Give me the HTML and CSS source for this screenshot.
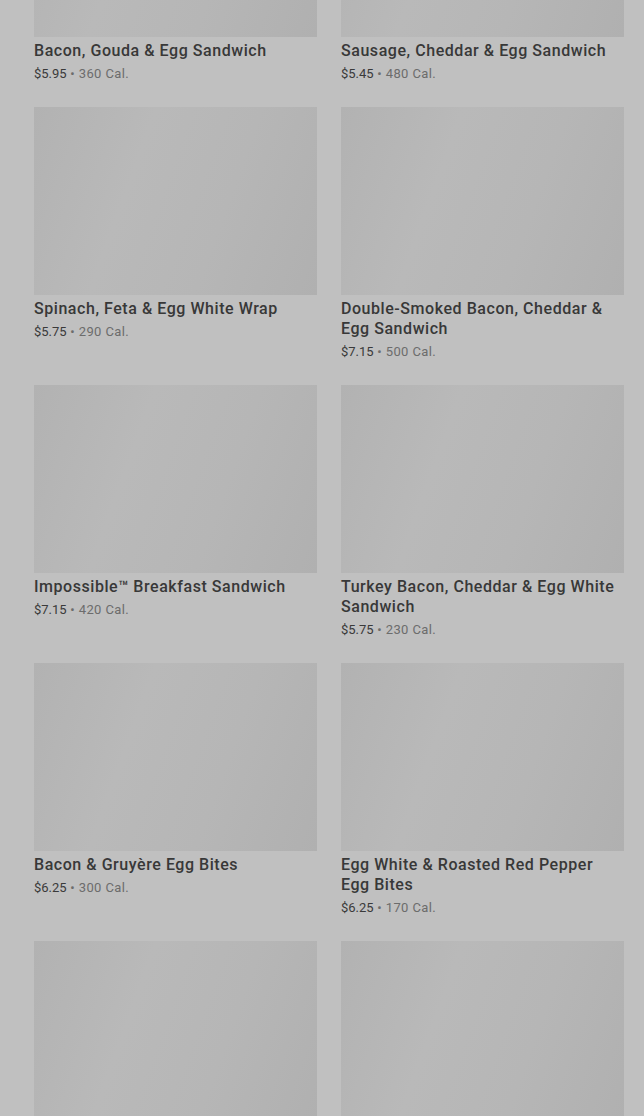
FILE: index.html
```html
<!DOCTYPE html>
<html lang="en">
<head>
<meta charset="utf-8">
<title>Breakfast</title>
<link rel="stylesheet" href="styles.css">
</head>
<body>
<div class="backdrop">
  <ul class="grid">
    <li class="item"><div class="thumb"></div><h3 class="name">Bacon, Gouda &amp; Egg Sandwich</h3><p class="meta"><span class="price">$5.95</span> <span class="cal">• 360 Cal.</span></p></li>
    <li class="item"><div class="thumb"></div><h3 class="name">Sausage, Cheddar &amp; Egg Sandwich</h3><p class="meta"><span class="price">$5.45</span> <span class="cal">• 480 Cal.</span></p></li>
    <li class="item"><div class="thumb"></div><h3 class="name">Spinach, Feta &amp; Egg White Wrap</h3><p class="meta"><span class="price">$5.75</span> <span class="cal">• 290 Cal.</span></p></li>
    <li class="item"><div class="thumb"></div><h3 class="name">Double-Smoked Bacon, Cheddar &amp; Egg Sandwich</h3><p class="meta"><span class="price">$7.15</span> <span class="cal">• 500 Cal.</span></p></li>
    <li class="item"><div class="thumb"></div><h3 class="name">Impossible™ Breakfast Sandwich</h3><p class="meta"><span class="price">$7.15</span> <span class="cal">• 420 Cal.</span></p></li>
    <li class="item"><div class="thumb"></div><h3 class="name">Turkey Bacon, Cheddar &amp; Egg White Sandwich</h3><p class="meta"><span class="price">$5.75</span> <span class="cal">• 230 Cal.</span></p></li>
    <li class="item"><div class="thumb"></div><h3 class="name">Bacon &amp; Gruyère Egg Bites</h3><p class="meta"><span class="price">$6.25</span> <span class="cal">• 300 Cal.</span></p></li>
    <li class="item"><div class="thumb"></div><h3 class="name">Egg White &amp; Roasted Red Pepper Egg Bites</h3><p class="meta"><span class="price">$6.25</span> <span class="cal">• 170 Cal.</span></p></li>
    <li class="item"><div class="thumb"></div></li>
    <li class="item"><div class="thumb"></div></li>
  </ul>
</div>
</body>
</html>
```
FILE: styles.css
```css
html, body {
  margin: 0;
  padding: 0;
  background: #c0c0c0;
  overflow: hidden;
}
.backdrop {
  height: 1116px;
  overflow: hidden;
  font-family: Roboto, "Liberation Sans", sans-serif;
}
.grid {
  list-style: none;
  margin: -151px 0 0 0;
  padding: 0 20px 0 34px;
  display: grid;
  grid-template-columns: 283px 283px;
  column-gap: 24px;
  row-gap: 23px;
  align-items: start;
}
.item {
  display: flex;
  flex-direction: column;
}
.thumb {
  height: 188px;
  background: linear-gradient(110deg, #b2b2b2 0%, #b9b9b9 35%, #b6b6b6 65%, #b0b0b0 100%);
}
.name {
  margin: 4px 0 0 0;
  font-size: 16px;
  line-height: 20px;
  font-weight: 500;
  color: #383838;
  letter-spacing: 0.55px;
}
.meta {
  margin: 3px 0 0 0;
  font-size: 13px;
  line-height: 20px;
  letter-spacing: 0.4px;
}
.price {
  color: #3a3a3a;
  letter-spacing: 0;
}
.cal {
  color: #6c6c6c;
}
```
